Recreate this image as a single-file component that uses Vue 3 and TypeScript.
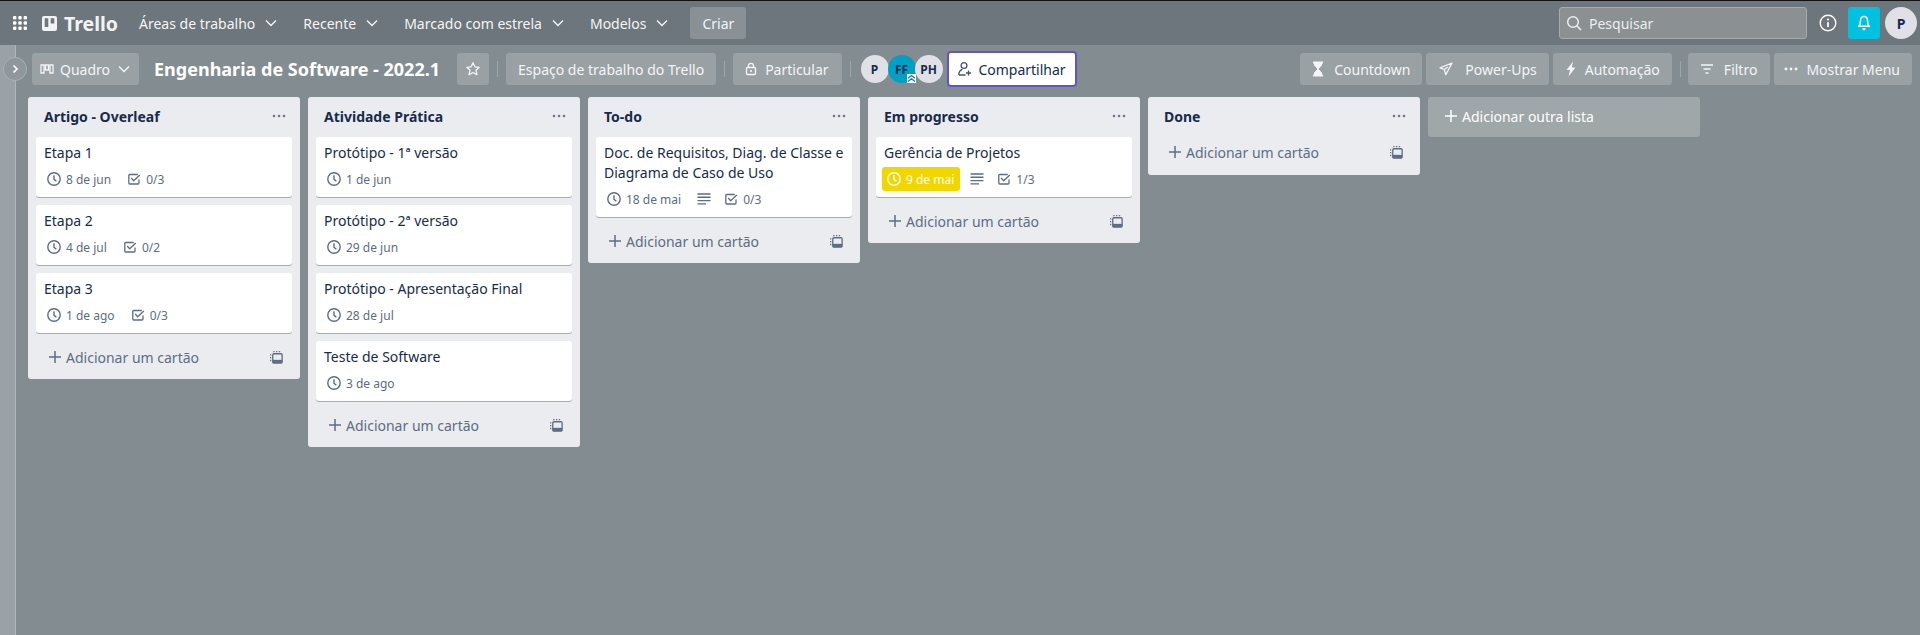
<template>
  <div class="page">
    <svg class="defs" width="0" height="0" aria-hidden="true">
      <symbol id="i-chev" viewBox="0 0 16 16"><path d="M3 5.5l5 5 5-5" fill="none" stroke="currentColor" stroke-width="1.4" /></symbol>
      <symbol id="i-clock" viewBox="0 0 16 16"><circle cx="8" cy="8" r="6.2" fill="none" stroke="currentColor" stroke-width="1.4" /><path d="M8 4.2V8.4l2.4 1.8" fill="none" stroke="currentColor" stroke-width="1.4" /></symbol>
      <symbol id="i-check" viewBox="0 0 16 16"><path d="M13 8.5v3.500a1 1 0 0 1-1 1H3.800a1 1 0 0 1-1-1V4.500a1 1 0 0 1 1-1h8" fill="none" stroke="currentColor" stroke-width="1.300" /><path d="M5.200 7l2.500 2.800L13.800 4" fill="none" stroke="currentColor" stroke-width="1.300" /></symbol>
      <symbol id="i-desc" viewBox="0 0 16 16"><path d="M1.500 3h13M1.500 6.300h13M1.500 9.600h13M1.500 12.900h8.500" fill="none" stroke="currentColor" stroke-width="1.400" /></symbol>
      <symbol id="i-plus" viewBox="0 0 14 14"><path d="M7 1v12M1 7h12" fill="none" stroke="currentColor" stroke-width="1.500" /></symbol>
      <symbol id="i-tpl" viewBox="0 0 16 16"><rect x="4" y="4" width="10" height="10" rx="1.200" fill="none" stroke="currentColor" stroke-width="1.400" /><rect x="4" y="10.500" width="10" height="3.500" fill="currentColor" /><path d="M1.800 4.500v1.400M1.800 7.500v1.400M1.800 10.500v1.400M4.500 1.800h1.400M7.500 1.800h1.400M10.500 1.800h1.400" stroke="currentColor" stroke-width="1.300" /></symbol>
    </svg>

    <header class="nav">
      <svg class="apps" viewBox="0 0 14 14" width="14" height="14">
        <g fill="currentColor">
          <rect v-for="d in appDots" :key="d.k" :x="d.x" :y="d.y" width="3.400" height="3.400" rx="1" />
        </g>
      </svg>
      <div class="logo">
        <svg viewBox="0 0 15 15" width="15" height="15">
          <path fill="currentColor" fill-rule="evenodd" d="M2 0h11a2 2 0 0 1 2 2v11a2 2 0 0 1-2 2H2a2 2 0 0 1-2-2V2a2 2 0 0 1 2-2zM2.700 2.200v8.800h3.600V2.200zm6 0v5.400h3.600V2.200z" />
        </svg>
        <span>Trello</span>
      </div>
      <div v-for="m in navMenus" :key="m" class="nav-item">
        <span>{{ m }}</span>
        <svg width="16" height="16"><use href="#i-chev" /></svg>
      </div>
      <button class="create">Criar</button>
      <div class="nav-right">
        <div class="search">
          <svg viewBox="0 0 16 16" width="16" height="16"><circle cx="7" cy="7" r="5.300" fill="none" stroke="currentColor" stroke-width="1.500" /><path d="M11 11l4 4" stroke="currentColor" stroke-width="1.700" /></svg>
          <span>Pesquisar</span>
        </div>
        <svg class="info" viewBox="0 0 18 18" width="18" height="18"><circle cx="9" cy="9" r="7.800" fill="none" stroke="currentColor" stroke-width="1.400" /><circle cx="9" cy="5.500" r="1.100" fill="currentColor" /><path d="M9 8v5" stroke="currentColor" stroke-width="1.700" /></svg>
        <div class="bell">
          <svg viewBox="0 0 16 18" width="14" height="16"><path d="M8 1.500c-2.700 0-4 2-4 4.500 0 3.500-.6 5-1.800 6.800h11.600C12.600 11 12 9.500 12 6c0-2.500-1.300-4.500-4-4.500z" fill="none" stroke="currentColor" stroke-width="1.700" /><rect x="6.300" y="14.800" width="3.400" height="2.400" rx="1" fill="currentColor" /></svg>
        </div>
        <div class="avatar me">P</div>
      </div>
    </header>

    <div class="body">
      <aside class="strip">
        <div class="collapse">
          <svg viewBox="0 0 8 10" width="8" height="10"><path d="M2.500 1.500L6 5 2.500 8.500" fill="none" stroke="currentColor" stroke-width="1.700" /></svg>
        </div>
      </aside>

      <main class="main">
        <div class="bar">
          <button class="btn quadro">
            <svg viewBox="0 0 14 12" width="14" height="12"><path d="M1 2h3v8H1zM5.500 2h3v5h-3zM10 2h3v8h-3z" fill="none" stroke="currentColor" stroke-width="1.300" /></svg>
            <span>Quadro</span>
            <svg width="16" height="16"><use href="#i-chev" /></svg>
          </button>
          <h1 class="title">Engenharia de Software - 2022.1</h1>
          <button class="btn star">
            <svg viewBox="0 0 16 16" width="16" height="16"><path d="M8 1.800l1.900 4 4.300.5-3.200 3 .9 4.400L8 11.500l-3.900 2.200.9-4.400-3.200-3 4.300-.5z" fill="none" stroke="currentColor" stroke-width="1.300" stroke-linejoin="round" /></svg>
          </button>
          <span class="sep"></span>
          <button class="btn">Espaço de trabalho do Trello</button>
          <span class="sep"></span>
          <button class="btn particular">
            <svg viewBox="0 0 12 14" width="12" height="14"><rect x="1.500" y="5.500" width="9" height="7" rx="1" fill="none" stroke="currentColor" stroke-width="1.300" /><path d="M3.500 5.500V3.800a2.500 2.500 0 0 1 5 0v1.700" fill="none" stroke="currentColor" stroke-width="1.300" /><circle cx="6" cy="9" r="1.100" fill="currentColor" /></svg>
            <span>Particular</span>
          </button>
          <span class="sep"></span>
          <div class="members">
            <div class="avatar small">P</div>
            <div class="avatar small ff">
              FF
              <span class="admin">
                <svg viewBox="0 0 9 9" width="9" height="9"><path d="M1 4.200l3.500-2.700L8 4.200M1 7.500l3.500-2.700L8 7.500" fill="none" stroke="#0079bf" stroke-width="1.200" /></svg>
              </span>
            </div>
            <div class="avatar small ph">PH</div>
          </div>
          <button class="share">
            <svg viewBox="0 0 16 16" width="16" height="16"><circle cx="7" cy="4.500" r="2.900" fill="none" stroke="#42526e" stroke-width="1.300" /><path d="M1.800 14c0-3 1.600-5 3.600-5.600M8.500 14H2" fill="none" stroke="#42526e" stroke-width="1.300" /><path d="M11.500 9.500v5M9 12h5" stroke="#42526e" stroke-width="1.300" /></svg>
            <span>Compartilhar</span>
          </button>

          <div class="bar-right">
            <button class="btn wide-gap">
              <svg viewBox="0 0 12 16" width="12" height="16"><path d="M1 1.500h10M1 14.500h10" stroke="currentColor" stroke-width="2" /><path d="M2.500 2v2.200L6 8l3.500-3.800V2M2.500 14v-2.200L6 8l3.500 3.800V14z" fill="currentColor" stroke="currentColor" stroke-width="1" /></svg>
              <span>Countdown</span>
            </button>
            <button class="btn power">
              <svg viewBox="0 0 16 16" width="16" height="16"><path d="M14 2L2 6.800l4.300 1.700 1.500 5.200L14 2zM6.300 8.500L10 6" fill="none" stroke="currentColor" stroke-width="1.300" stroke-linejoin="round" /></svg>
              <span>Power-Ups</span>
            </button>
            <button class="btn">
              <svg viewBox="0 0 12 16" width="12" height="16"><path d="M8 .5L1.500 9H5l-1.500 6.500L10.500 6.500H6.800z" fill="currentColor" /></svg>
              <span>Automação</span>
            </button>
            <span class="sep"></span>
            <button class="btn wide-gap filter">
              <svg viewBox="0 0 14 14" width="14" height="14"><path d="M1 3h12M3.500 7h7M5.500 11h3" stroke="currentColor" stroke-width="1.500" /></svg>
              <span>Filtro</span>
            </button>
            <button class="btn menu">
              <svg viewBox="0 0 14 14" width="14" height="14"><g fill="currentColor"><circle cx="2" cy="7" r="1.400" /><circle cx="7" cy="7" r="1.400" /><circle cx="12" cy="7" r="1.400" /></g></svg>
              <span>Mostrar Menu</span>
            </button>
          </div>
        </div>

        <div class="lists">
          <section v-for="list in lists" :key="list.name" class="list">
            <div class="list-head">
              <h2>{{ list.name }}</h2>
              <svg viewBox="0 0 14 4" width="14" height="4"><g fill="#6b778c"><circle cx="2" cy="2" r="1.300" /><circle cx="7" cy="2" r="1.300" /><circle cx="12" cy="2" r="1.300" /></g></svg>
            </div>
            <div v-if="list.cards.length" class="cards">
              <article v-for="card in list.cards" :key="card.title" class="card">
                <div class="card-title">{{ card.title }}</div>
                <div class="badges">
                  <span class="badge" :class="{ due: card.soon }">
                    <svg width="16" height="16"><use href="#i-clock" /></svg>
                    {{ card.date }}
                  </span>
                  <span v-if="card.desc" class="badge icon-only">
                    <svg width="16" height="16"><use href="#i-desc" /></svg>
                  </span>
                  <span v-if="card.checks" class="badge">
                    <svg width="16" height="16"><use href="#i-check" /></svg>
                    {{ card.checks }}
                  </span>
                </div>
              </article>
            </div>
            <div class="add-card">
              <svg width="14" height="14"><use href="#i-plus" /></svg>
              <span>Adicionar um cartão</span>
              <svg class="tpl" width="15" height="15"><use href="#i-tpl" /></svg>
            </div>
          </section>
          <div class="add-list">
            <svg width="14" height="14"><use href="#i-plus" /></svg>
            <span>Adicionar outra lista</span>
          </div>
        </div>
      </main>
    </div>
  </div>
</template>

<script setup lang="ts">
interface Card {
  title: string
  date: string
  checks?: string
  desc?: boolean
  soon?: boolean
}

interface List {
  name: string
  cards: Card[]
}

const navMenus = ['Áreas de trabalho', 'Recente', 'Marcado com estrela', 'Modelos']

const appDots = [0, 1, 2].flatMap(r =>
  [0, 1, 2].map(c => ({ k: `${r}-${c}`, x: c * 5.3, y: r * 5.3 }))
)

const lists: List[] = [
  {
    name: 'Artigo - Overleaf',
    cards: [
      { title: 'Etapa 1', date: '8 de jun', checks: '0/3' },
      { title: 'Etapa 2', date: '4 de jul', checks: '0/2' },
      { title: 'Etapa 3', date: '1 de ago', checks: '0/3' }
    ]
  },
  {
    name: 'Atividade Prática',
    cards: [
      { title: 'Protótipo - 1ª versão', date: '1 de jun' },
      { title: 'Protótipo - 2ª versão', date: '29 de jun' },
      { title: 'Protótipo - Apresentação Final', date: '28 de jul' },
      { title: 'Teste de Software', date: '3 de ago' }
    ]
  },
  {
    name: 'To-do',
    cards: [
      {
        title: 'Doc. de Requisitos, Diag. de Classe e Diagrama de Caso de Uso',
        date: '18 de mai',
        desc: true,
        checks: '0/3'
      }
    ]
  },
  {
    name: 'Em progresso',
    cards: [{ title: 'Gerência de Projetos', date: '9 de mai', desc: true, checks: '1/3', soon: true }]
  },
  { name: 'Done', cards: [] }
]
</script>

<style>
html,
body {
  margin: 0;
  overflow: hidden;
}
</style>

<style scoped>
.page {
  width: 1920px;
  height: 635px;
  overflow: hidden;
  background: #838c91;
  font-family: "Noto Sans", sans-serif;
  font-size: 14px;
  color: #fff;
  display: flex;
  flex-direction: column;
}

.defs {
  position: absolute;
}

button {
  font-family: inherit;
  font-size: 14px;
  border: none;
  cursor: pointer;
}

/* top nav */
.nav {
  height: 44px;
  flex: none;
  border-top: 1px solid #111;
  background: #6d767c;
  display: flex;
  align-items: center;
  padding-left: 13px;
}

.apps {
  margin-right: 15px;
}

.logo {
  display: flex;
  align-items: center;
  gap: 7px;
  font-size: 19.5px;
  font-weight: 700;
  width: 97px;
  color: #f2f3f4;
}

.nav-item {
  display: flex;
  align-items: center;
  gap: 8px;
  margin-right: 24px;
  color: #f4f5f6;
  white-space: nowrap;
}

.create {
  width: 56px;
  height: 32px;
  margin-left: -4px;
  border-radius: 3px;
  background: #899196;
  color: #f4f5f6;
}

.nav-right {
  margin-left: auto;
  display: flex;
  align-items: center;
}

.search {
  width: 248px;
  height: 32px;
  box-sizing: border-box;
  border: 1px solid #a5abae;
  border-radius: 3px;
  background: #8b9092;
  color: #eceeef;
  display: flex;
  align-items: center;
  gap: 7px;
  padding-left: 6px;
}

.info {
  margin: 0 11px 0 12px;
}

.bell {
  width: 32px;
  height: 32px;
  border-radius: 3px;
  background: #00c2e0;
  display: flex;
  align-items: center;
  justify-content: center;
}

.avatar {
  border-radius: 50%;
  background: #dfe1e6;
  color: #172b4d;
  font-weight: 700;
  display: flex;
  align-items: center;
  justify-content: center;
}

.me {
  width: 32px;
  height: 32px;
  margin: 0 3px 0 5px;
  font-size: 14px;
}

/* page body */
.body {
  flex: 1;
  display: flex;
  min-height: 0;
}

.strip {
  position: relative;
  width: 15px;
  flex: none;
  background: #9aa2a7;
  border-right: 1px solid #b0b5b9;
}

.collapse {
  position: absolute;
  left: 3px;
  top: 12px;
  width: 24px;
  height: 24px;
  box-sizing: border-box;
  border: 1px solid #aab0b4;
  border-radius: 50%;
  background: #8f979c;
  display: flex;
  align-items: center;
  justify-content: center;
}

.main {
  flex: 1;
  min-width: 0;
}

/* board bar */
.bar {
  height: 32px;
  padding: 8px 8px 12px 16px;
  display: flex;
  align-items: center;
}

.btn {
  height: 32px;
  padding: 0 12px;
  border-radius: 3px;
  background: #9aa1a4;
  color: #f4f5f6;
  display: flex;
  align-items: center;
  gap: 8px;
  white-space: nowrap;
}

.wide-gap {
  gap: 10px;
}

.power {
  gap: 11px;
}

.filter {
  padding-right: 13px;
}

.menu {
  padding-left: 10px;
}

.quadro {
  padding: 0 7px 0 8px;
  gap: 6px;
  margin-right: 15px;
}

.title {
  margin: 0 17px 0 0;
  font-size: 18px;
  font-weight: 700;
  line-height: 32px;
  white-space: nowrap;
}

.star {
  width: 32px;
  padding: 0;
  justify-content: center;
}

.sep {
  width: 1px;
  height: 16px;
  background: #9fa6aa;
  margin: 0 8px;
}

.particular {
  padding-right: 13px;
}

.members {
  display: flex;
  margin: 0 4px 0 2px;
}

.small {
  width: 28px;
  height: 28px;
  font-size: 12px;
  position: relative;
}

.small + .small {
  margin-left: -1px;
}

.ff {
  background: #00a0c4;
}

.admin {
  position: absolute;
  right: 0;
  bottom: 0;
  width: 9px;
  height: 9px;
  background: #fff;
  display: flex;
}

.share {
  height: 36px;
  width: 130px;
  box-sizing: border-box;
  background: #fff;
  border: 2px solid #6554c0;
  border-radius: 4px;
  color: #172b4d;
  display: flex;
  align-items: center;
  justify-content: center;
  gap: 5px;
}

.bar-right {
  margin-left: auto;
  display: flex;
  align-items: center;
  gap: 4px;
}

.bar-right .sep {
  margin: 0 3px 0 4px;
}

/* lists */
.lists {
  display: flex;
  align-items: flex-start;
  gap: 8px;
  padding-left: 12px;
}

.list {
  width: 272px;
  flex: none;
  background: #ebecf0;
  border-radius: 3px;
  padding-bottom: 8px;
}

.list-head {
  height: 40px;
  box-sizing: border-box;
  padding: 0 14px 2px 16px;
  display: flex;
  align-items: center;
  justify-content: space-between;
}

.list-head h2 {
  margin: 0;
  font-size: 14px;
  font-weight: 700;
  color: #172b4d;
}

.cards {
  padding: 0 8px 8px;
  display: flex;
  flex-direction: column;
  gap: 8px;
}

.card {
  background: #fff;
  border-radius: 3px;
  box-shadow: 0 1px 0 #a6aebb;
  padding: 6px 8px;
}

.card-title {
  color: #172b4d;
  line-height: 20px;
  margin-bottom: 4px;
}

.badges {
  display: flex;
  gap: 5px;
  margin-left: -2px;
}

.badge {
  height: 24px;
  padding: 0 6px 0 4px;
  border-radius: 3px;
  display: flex;
  align-items: center;
  gap: 4px;
  font-size: 12px;
  color: #5e6c84;
}

.icon-only {
  padding-right: 2px;
}

.due {
  background: #f2d600;
  color: #fff;
}

.add-card {
  height: 30px;
  box-sizing: border-box;
  margin: 0 8px;
  padding: 0 8px 0 12px;
  display: flex;
  align-items: center;
  gap: 4px;
  color: #5e6c84;
}

.cards + .add-card {
  padding-top: 2px;
}

.tpl {
  margin-left: auto;
}

.add-list {
  width: 272px;
  height: 40px;
  flex: none;
  box-sizing: border-box;
  padding: 0 0 2px 16px;
  border-radius: 3px;
  background: #a0a7a9;
  display: flex;
  align-items: center;
  gap: 4px;
}
</style>
